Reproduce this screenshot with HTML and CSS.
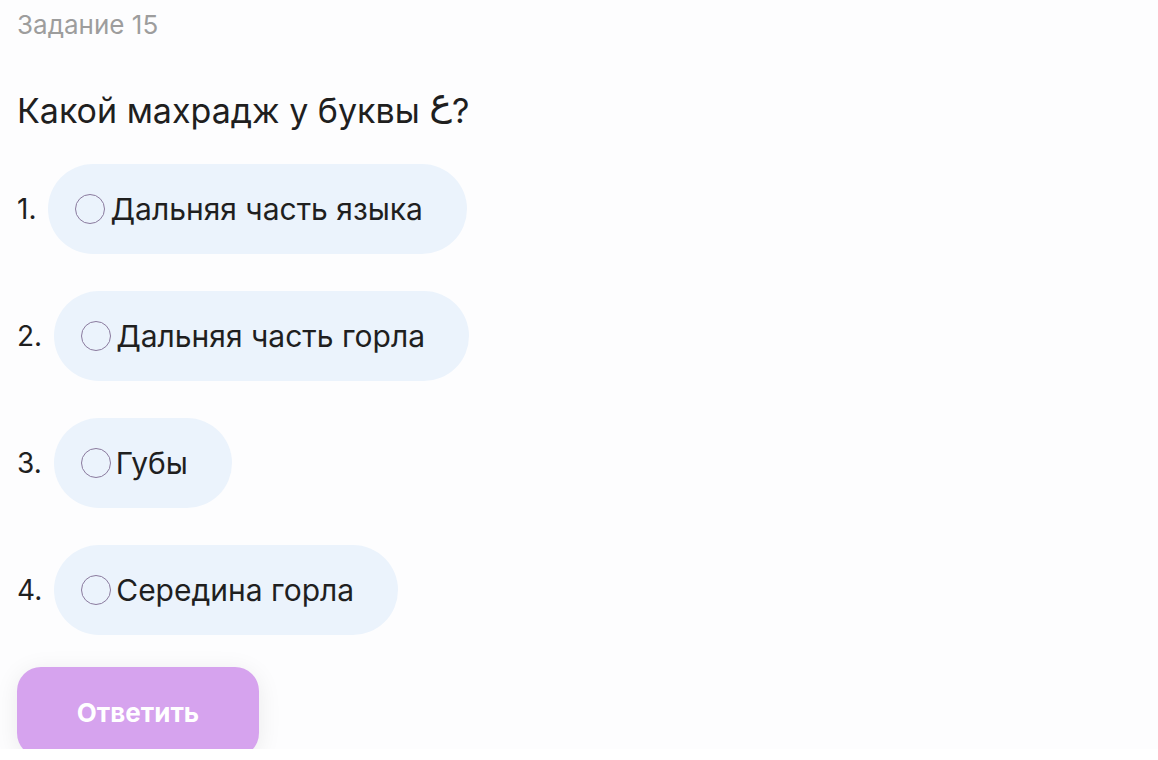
FILE: index.html
```html
<!DOCTYPE html>
<html lang="ru">
  <head>
    <meta charset="utf-8" />
    <meta name="viewport" content="width=device-width, initial-scale=1.0" />
    <link rel="stylesheet" href="styles.css">
  </head>
  <body>
    <div class="page">
      <div class="task-title">Задание 15</div>
      <div class="question">Какой махрадж у буквы <span class="arabic">ع</span>?</div>

      <ol class="answers">
        <li class="answer">
          <span class="num">1.</span>
          <label class="pill"><span class="radio"></span>Дальняя часть языка</label>
        </li>
        <li class="answer">
          <span class="num">2.</span>
          <label class="pill"><span class="radio"></span>Дальняя часть горла</label>
        </li>
        <li class="answer">
          <span class="num">3.</span>
          <label class="pill"><span class="radio"></span>Губы</label>
        </li>
        <li class="answer">
          <span class="num">4.</span>
          <label class="pill"><span class="radio"></span>Середина горла</label>
        </li>
      </ol>

      <button class="submit">Ответить</button>
    </div>
  </body>
</html>
```

FILE: styles.css
```css
body {
  margin: 0;
  background: #fff;
  font-family: Inter, "Noto Sans", sans-serif;
  color: #1f1f1f;
}

.page {
  height: 749px;
  overflow: hidden;
  background: #fdfdfe;
  padding: 0 17px;
}

.task-title {
  padding-top: 10px;
  font-size: 26px;
  line-height: 30px;
  color: #9d9d9d;
}

.question {
  margin-top: 43px;
  font-size: 34px;
  line-height: 44px;
}

.arabic {
  font-family: "DejaVu Sans", sans-serif;
  font-size: 38px;
  line-height: 1;
  vertical-align: 8px; /* the isolated letter hangs low otherwise */
}

.answers {
  list-style: none;
  margin: 31px 0 0;
  padding: 0;
  display: flex;
  flex-direction: column;
  gap: 37px;
}

.answer {
  display: flex;
  align-items: center;
  gap: 12px;
}

.num {
  font-size: 28px;
}

.pill {
  display: flex;
  align-items: center;
  gap: 5px;
  height: 90px;
  padding: 0 44px 0 27px;
  border-radius: 45px;
  background: #ebf3fc;
  font-size: 30px;
  cursor: pointer;
}

.radio {
  width: 28px;
  height: 28px;
  border: 1.5px solid #8a7a9e;
  border-radius: 50%;
}

.submit {
  margin-top: 32px;
  width: 242px;
  height: 90px;
  border: none;
  border-radius: 24px;
  background: #d6a3ee;
  color: #fff;
  font-family: inherit;
  font-size: 26px;
  font-weight: 700;
  box-shadow: 0 4px 24px rgba(0, 0, 0, 0.08);
  cursor: pointer;
}
```
